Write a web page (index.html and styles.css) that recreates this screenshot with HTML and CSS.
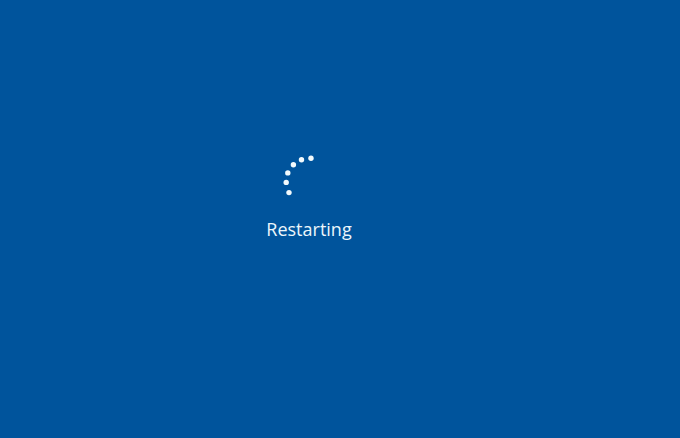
FILE: index.html
```html
<!DOCTYPE html>
<html lang="en">
<head>
    <meta charset="UTF-8">
    <meta name="viewport" content="width=device-width, initial-scale=1.0">
    <title>Restarting</title>
    <link rel="stylesheet" href="styles.css">
</head>
<body>
    <main class="screen">
        <div class="status" role="status">
            <svg class="spinner" viewBox="0 0 54 54" aria-hidden="true">
                <circle cx="29" cy="3.3" r="2.7"/>
                <circle cx="19.5" cy="4.8" r="2.7"/>
                <circle cx="11.4" cy="9.8" r="2.7"/>
                <circle cx="5.8" cy="17.9" r="2.7"/>
                <circle cx="4.2" cy="27.4" r="2.7"/>
                <circle cx="7" cy="37.6" r="2.7"/>
            </svg>
            <p class="message">Restarting</p>
        </div>
    </main>
</body>
</html>
```

FILE: styles.css
```css
body {
    margin: 0;
    background-color: #00549c;
    color: #ecf6fb;
    font-family: 'Segoe UI', 'Open Sans', sans-serif;
}

.screen {
    box-sizing: border-box;
    min-height: 100vh;
    display: flex;
    justify-content: center;
    align-items: center;
    padding: 0 62px 42px 0;
}

.status {
    display: flex;
    flex-direction: column;
    align-items: center;
    gap: 8px;
}

.spinner {
    width: 54px;
    height: 54px;
    fill: #f2fafd;
}

.message {
    margin: 0;
    font-size: 18px;
    line-height: 24px;
}
```
